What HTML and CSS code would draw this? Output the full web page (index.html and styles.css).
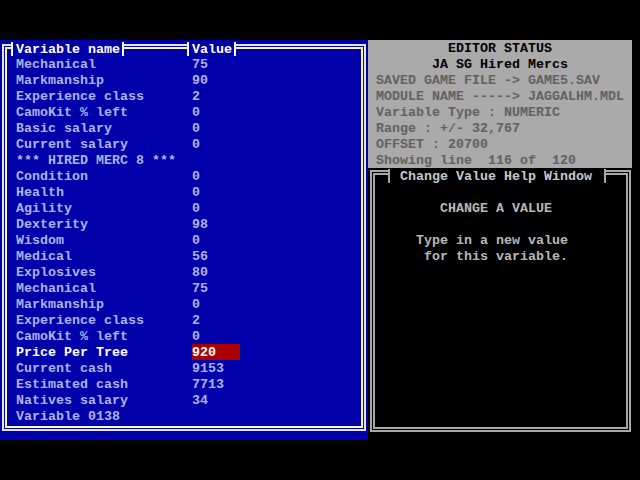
FILE: index.html
```html
<!DOCTYPE html>
<html>
<head>
<meta charset="utf-8">
<title>JA SG Editor</title>
<link rel="stylesheet" href="styles.css">
</head>
<body>
<div class="screen">
  <div class="panes">
    <section class="editor">
      <div class="frame"></div>
      <div class="head">
        <span class="label name-label">Variable name</span>
        <span class="label value-label">Value</span>
      </div>
      <div class="rows">
        <span>Mechanical</span><span>75</span>
        <span>Markmanship</span><span>90</span>
        <span>Experience class</span><span>2</span>
        <span>CamoKit % left</span><span>0</span>
        <span>Basic salary</span><span>0</span>
        <span>Current salary</span><span>0</span>
        <span class="wide">*** HIRED MERC 8 ***</span>
        <span>Condition</span><span>0</span>
        <span>Health</span><span>0</span>
        <span>Agility</span><span>0</span>
        <span>Dexterity</span><span>98</span>
        <span>Wisdom</span><span>0</span>
        <span>Medical</span><span>56</span>
        <span>Explosives</span><span>80</span>
        <span>Mechanical</span><span>75</span>
        <span>Markmanship</span><span>0</span>
        <span>Experience class</span><span>2</span>
        <span>CamoKit % left</span><span>0</span>
        <span class="current">Price Per Tree</span><span><span class="edit">920</span></span>
        <span>Current cash</span><span>9153</span>
        <span>Estimated cash</span><span>7713</span>
        <span>Natives salary</span><span>34</span>
        <span>Variable 0138</span><span></span>
      </div>
    </section>
    <div class="side">
      <section class="status">
        <div class="center dark">EDITOR STATUS</div>
        <div class="center dark">JA SG Hired Mercs</div>
        <div>SAVED GAME FILE -&gt; GAME5.SAV</div>
        <div>MODULE NAME -----&gt; JAGGALHM.MDL</div>
        <div>Variable Type : NUMERIC</div>
        <div>Range : +/- 32,767</div>
        <div>OFFSET : 20700</div>
        <div>Showing line  116 of  120</div>
      </section>
      <section class="help">
        <div class="frame"></div>
        <div class="help-head"><span class="help-title">Change Value Help Window</span></div>
        <pre class="help-text">
   CHANGE A VALUE

Type in a new value
 for this variable.</pre>
      </section>
    </div>
  </div>
</div>
</body>
</html>
```

FILE: styles.css
```css
html, body {
  margin: 0;
  padding: 0;
  background: #000;
}

.screen {
  width: 640px;
  height: 480px;
  background: #000;
  padding-top: 40px;
  box-sizing: border-box;
  font-family: "Liberation Mono", "DejaVu Sans Mono", monospace;
  font-size: 13.333px;
  font-weight: bold;
  line-height: 16px;
}

.panes {
  display: flex;
  align-items: flex-start;
}

/* ---------- left editor pane ---------- */
.editor {
  position: relative;
  width: 368px;
  height: 400px;
  background: #0000aa;
  color: #aeb4ea;
}

.editor .frame {
  position: absolute;
  top: 4px;
  left: 2px;
  right: 2px;
  bottom: 9px;
  border: 2px solid #e6e6e6;
}

.editor .frame::before {
  content: "";
  position: absolute;
  top: 1px;
  left: 1px;
  right: 1px;
  bottom: 1px;
  border: 2px solid #fafaa8;
}

.head {
  position: relative;
  display: flex;
  height: 16px;
  color: #ffffff;
}

.label {
  background: #0000aa;
  border-left: 2px solid #ffffff;
  border-right: 2px solid #ffffff;
  padding: 0 2px 0 3px;
  height: 14px;
  margin-top: 2px;
  line-height: 15px;
  white-space: pre;
}

.name-label {
  margin-left: 11px;
}

.value-label {
  margin-left: 63px;
}

.rows {
  position: relative;
  display: grid;
  grid-template-columns: 176px 1fr;
  grid-auto-rows: 16px;
  padding-left: 16px;
  white-space: pre;
  line-height: 18px;
}

.rows .wide {
  grid-column: 1 / 3;
}

.rows .current {
  color: #ffffff;
}

.edit {
  display: inline-block;
  width: 48px;
  height: 16px;
  background: #aa0000;
  color: #ffffff;
  vertical-align: top;
}

/* ---------- right column ---------- */
.side {
  width: 264px;
  display: flex;
  flex-direction: column;
}

.status {
  height: 128px;
  background: #aaaaaa;
  color: #606060;
  padding-left: 8px;
  box-sizing: border-box;
}

.status > div {
  height: 16px;
  line-height: 18px;
  white-space: pre;
}

.status .center {
  text-align: center;
  padding-right: 8px;
}

.status .dark {
  color: #000000;
}

.help {
  position: relative;
  height: 272px;
  background: #000;
  color: #b8b8b8;
}

.help .frame {
  position: absolute;
  top: 2px;
  left: 2px;
  right: 1px;
  bottom: 8px;
  border: 2px solid #a8a8a8;
}

.help .frame::before {
  content: "";
  position: absolute;
  top: 1px;
  left: 1px;
  right: 1px;
  bottom: 1px;
  border: 2px solid #a8a8a8;
}

.help-head {
  position: relative;
  height: 16px;
  display: flex;
}

.help-title {
  margin-left: 20px;
  background: #000;
  color: #c8c8c8;
  border-left: 2px solid #a8a8a8;
  border-right: 2px solid #a8a8a8;
  padding: 0 12px 0 10px;
  height: 14px;
  margin-top: 1px;
  line-height: 16px;
  white-space: pre;
}

.help-text {
  position: relative;
  margin: 16px 0 0 48px;
  padding-top: 1px;
  font: inherit;
  line-height: 16px;
}
```
